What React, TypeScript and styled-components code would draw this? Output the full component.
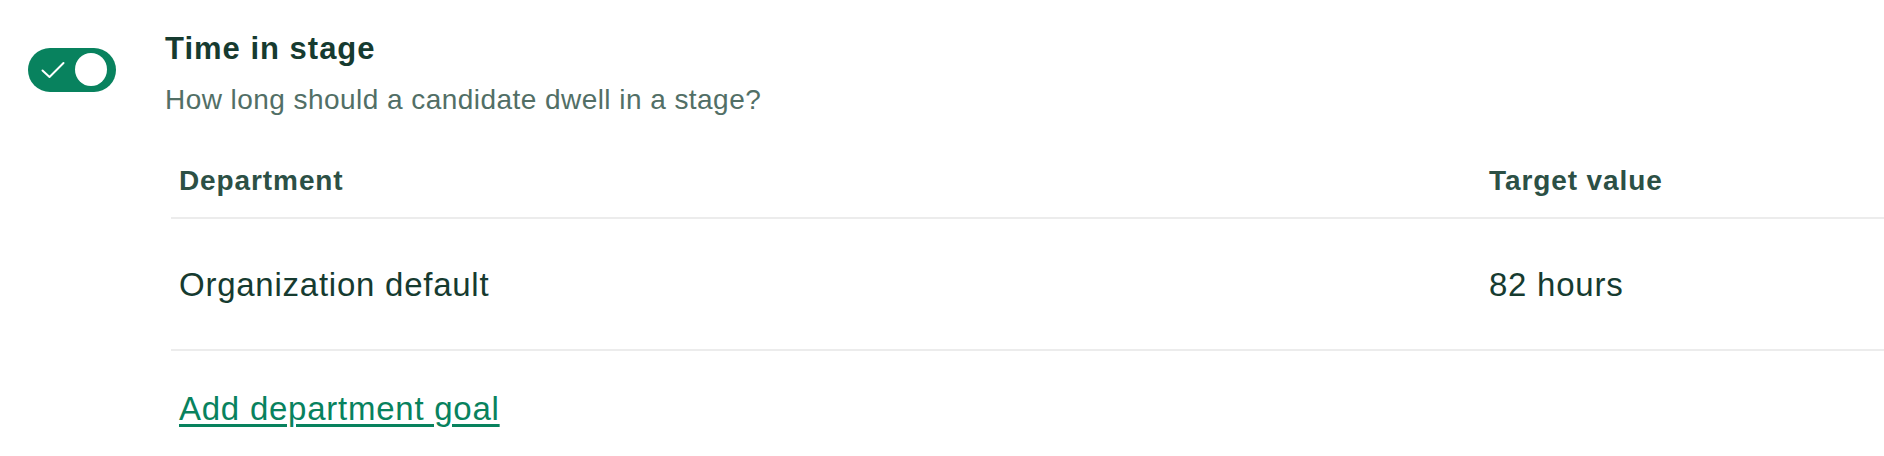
import styled, { createGlobalStyle } from "styled-components";

const GREEN = "#08825e";
const INK = "#163b30";
const MUTED = "#526f66";
const HEAD = "#2c5045";
const RULE = "#ececec";

const GlobalStyle = createGlobalStyle`
  body {
    margin: 0;
    background: #ffffff;
    font-family: "Liberation Sans", Arial, sans-serif;
  }
`;

const Page = styled.div`
  display: flex;
  gap: 49px;
  padding: 30px 0 0 28px;
`;

const Switch = styled.button<{ on: boolean }>`
  position: relative;
  flex: none;
  width: 88px;
  height: 44px;
  margin-top: 18px;
  padding: 0;
  border: none;
  border-radius: 22px;
  background: ${(p) => (p.on ? GREEN : "#c9cfcd")};
  cursor: pointer;
`;

const Knob = styled.span`
  position: absolute;
  top: 5px;
  right: 9px;
  width: 32px;
  height: 33px;
  border-radius: 50%;
  background: #ffffff;
`;

const Check = styled.svg`
  position: absolute;
  left: 13px;
  top: 13px;
`;

const Body = styled.div`
  flex: 1;
  display: flex;
  flex-direction: column;
`;

const Title = styled.div`
  font-size: 31px;
  line-height: 37px;
  font-weight: 700;
  letter-spacing: 1px;
  color: ${INK};
`;

const Subtitle = styled.div`
  margin-top: 15px;
  font-size: 28px;
  line-height: 36px;
  letter-spacing: 0.45px;
  color: ${MUTED};
`;

const Table = styled.div`
  margin: 47px 0 0 6px;
  display: grid;
  grid-template-columns: 1310px 1fr;
`;

const HeadCell = styled.div`
  padding: 0 8px 20px;
  border-bottom: 2px solid ${RULE};
  font-size: 28px;
  line-height: 32px;
  font-weight: 700;
  letter-spacing: 0.9px;
  color: ${HEAD};
`;

const Cell = styled.div`
  padding: 46px 8px 44px;
  border-bottom: 2px solid ${RULE};
  font-size: 33px;
  line-height: 40px;
  letter-spacing: 0.75px;
  color: ${INK};
`;

const Footer = styled.div`
  grid-column: 1 / -1;
  padding: 38px 8px 0;
`;

const AddLink = styled.a`
  font-size: 33px;
  line-height: 40px;
  letter-spacing: 0.75px;
  color: ${GREEN};
  text-decoration: underline;
  text-decoration-thickness: 3px;
  text-underline-offset: 4px;
  cursor: pointer;
`;

const App = () => (
  <>
    <GlobalStyle />
    <Page>
      <Switch on aria-label="Time in stage enabled">
        <Check width="24" height="18" viewBox="0 0 24 18" fill="none">
          <path
            d="M1.5 9.5 L8.5 16 L22.5 2"
            stroke="#ffffff"
            strokeWidth="2"
            strokeLinecap="round"
            strokeLinejoin="round"
          />
        </Check>
        <Knob />
      </Switch>
      <Body>
        <Title>Time in stage</Title>
        <Subtitle>How long should a candidate dwell in a stage?</Subtitle>
        <Table>
          <HeadCell>Department</HeadCell>
          <HeadCell>Target value</HeadCell>
          <Cell>Organization default</Cell>
          <Cell>82 hours</Cell>
          <Footer>
            <AddLink>Add department goal</AddLink>
          </Footer>
        </Table>
      </Body>
    </Page>
  </>
);

export default App;
